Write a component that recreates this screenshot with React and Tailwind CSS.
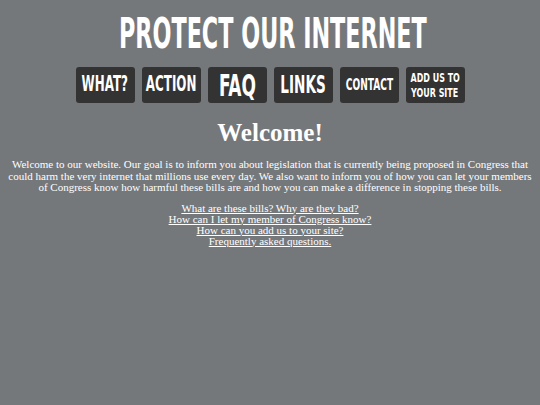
import React from 'react';

const navItems = [
  { label: 'WHAT?', size: 'text-[21px]' },
  { label: 'ACTION', size: 'text-[21px]' },
  { label: 'FAQ', size: 'text-[30px]' },
  { label: 'LINKS', size: 'text-[24px]' },
  { label: 'CONTACT', size: 'text-[16px]' },
];

const links = [
  'What are these bills? Why are they bad?',
  'How can I let my member of Congress know?',
  'How can you add us to your site?',
  'Frequently asked questions.',
];

export default function App() {
  return (
    <div className="min-h-[405px] w-full bg-[#75787b] text-white">
      <div className="flex flex-col items-center pt-[13px]">
        <h1 className="ml-[6px] text-[42px] leading-[42px] font-bold whitespace-nowrap [font-family:'DejaVu_Sans_Condensed','DejaVu_Sans',sans-serif] scale-x-[0.59]">
          PROTECT OUR INTERNET
        </h1>

        <nav className="mt-[12px] flex gap-[7px]">
          {navItems.map((item) => (
            <a
              key={item.label}
              href="#"
              className={`flex h-[36px] w-[59px] items-center justify-center rounded-[3px] bg-[#333333] font-bold text-white [font-family:'DejaVu_Sans_Condensed','DejaVu_Sans',sans-serif] ${item.size}`}
            >
              <span className="scale-x-[0.63] whitespace-nowrap">{item.label}</span>
            </a>
          ))}
          <a
            href="#"
            className="flex h-[36px] w-[59px] flex-col items-center justify-center rounded-[3px] bg-[#333333] text-[13px] leading-[15px] font-bold text-white [font-family:'DejaVu_Sans_Condensed','DejaVu_Sans',sans-serif]"
          >
            <span className="scale-x-[0.68] whitespace-nowrap">ADD US TO</span>
            <span className="scale-x-[0.68] whitespace-nowrap">YOUR SITE</span>
          </a>
        </nav>

        <div className="mt-[16px] w-full px-[4px] text-center [font-family:'Liberation_Serif',serif]">
          <h2 className="text-[25px] leading-[28px] font-bold">Welcome!</h2>
          <p className="mt-[12px] text-[11px] leading-[11.5px]">
            Welcome to our website. Our goal is to inform you about legislation that is currently being proposed in Congress that could harm the very internet that millions use every day. We also want to inform you of how you can let your members of Congress know how harmful these bills are and how you can make a difference in stopping these bills.
          </p>
          <ul className="mt-[9px] flex flex-col items-center text-[11px] leading-[11px]">
            {links.map((l) => (
              <li key={l}>
                <a href="#" className="underline">{l}</a>
              </li>
            ))}
          </ul>
        </div>
      </div>
    </div>
  );
}
